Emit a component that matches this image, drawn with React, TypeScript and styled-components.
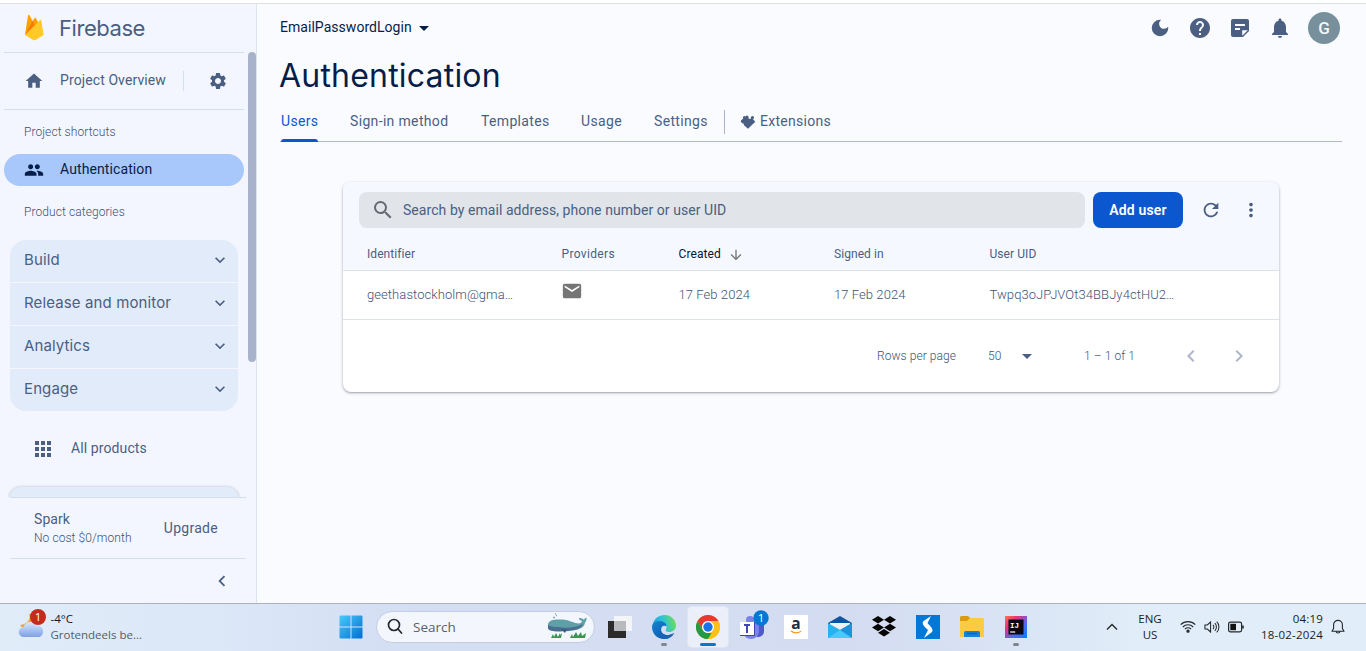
import React from "react";
import styled, { createGlobalStyle } from "styled-components";
import {
  MdHome, MdSettings, MdPeople, MdKeyboardArrowDown, MdApps, MdChevronLeft, MdChevronRight,
  MdDarkMode, MdHelp, MdNotifications, MdArrowDropDown, MdSearch, MdArrowDownward,
  MdEmail, MdRefresh, MdMoreVert,
} from "react-icons/md";

const slate = "#4a5f82";
const ink = "#041e49";
const medium = 450;
const light = 360;

const GlobalStyle = createGlobalStyle`
  * { box-sizing: border-box; }
  body { margin: 0; font-family: Roboto, "Liberation Sans", sans-serif; color: ${slate}; }
  svg { display: block; flex: none; }
`;

const Screen = styled.div`
  width: 1366px;
  height: 651px;
  overflow: hidden;
  display: flex;
  flex-direction: column;
  background: #fafbff;
`;
const BrowserEdge = styled.div`
  height: 4px;
  flex: none;
  background: #fff;
  border-bottom: 1px solid #dfe0e4;
`;
const Workspace = styled.div`
  height: 599px;
  display: flex;
`;

const Text = styled.span<{ $size?: number; $weight?: number; $track?: number; $color?: string }>`
  font-size: ${p => p.$size ?? 14}px;
  font-weight: ${p => p.$weight ?? light};
  letter-spacing: ${p => p.$track ?? 0.07}px;
  color: ${p => p.$color ?? (p.$weight ? slate : "#3d5275")};
  white-space: nowrap;
`;

/* ---- sidebar ---- */
const Sidebar = styled.aside`
  width: 257px;
  flex: none;
  display: flex;
  flex-direction: column;
  background: #f3f6fe;
  border-right: 1px solid #dde3ee;
`;
const Brand = styled.div`
  height: 49px;
  margin: 0 12px 0 4px;
  padding-left: 20px;
  display: flex;
  align-items: center;
  border-bottom: 1px solid #d7dfec;
`;
const BrandName = styled.span`
  margin-left: 14px;
  font: 400 22px Inter, sans-serif;
  letter-spacing: -0.45px;
`;
const NavScroll = styled.div`
  height: 444px;
  display: flex;
  justify-content: space-between;
`;
const NavContent = styled.div`
  width: 244px;
  padding-left: 4px;
  overflow: hidden;
`;
const Scrollbar = styled.div`
  width: 8px;
  height: 310px;
  margin-top: -1px;
  border-radius: 4px;
  background: #a8b3cb;
`;
const Overview = styled.div`
  height: 57px;
  padding: 0 0 2px 20px;
  display: flex;
  align-items: center;
  border-bottom: 1px solid #d7dfec;
  svg { margin-top: 2px; }
`;
const OverviewLabel = styled(Text)`
  width: 123px;
  margin-left: 16px;
`;
const GearCell = styled.div`
  width: 61px;
  height: 20px;
  padding-left: 24px;
  display: flex;
  align-items: center;
  border-left: 1px solid #d7dfec;
  margin-top: 2px;
  svg { margin-top: 0; }
`;
const SectionLabel = styled.div<{ $top?: number }>`
  height: 44px;
  margin-top: ${p => p.$top ?? 0}px;
  padding-left: 20px;
  font-size: 12px;
  font-weight: ${light};
  letter-spacing: 0.08px;
  line-height: 44px;
  color: #3d5275;
`;
const ActiveItem = styled.div`
  height: 32px;
  width: 240px;
  padding-left: 20px;
  display: flex;
  align-items: center;
  gap: 16px;
  border-radius: 16px;
  background: #a8c7fa;
  ${Text} { margin-bottom: 2px; }
`;
const Categories = styled.div`
  width: 228px;
  margin: 6px 0 0 6px;
  display: grid;
  gap: 1px;
  border-radius: 16px;
  overflow: hidden;
`;
const Category = styled.div`
  height: 42px;
  padding: 0 8px 3px 14px;
  display: flex;
  align-items: center;
  justify-content: space-between;
  background: #e2ebfa;
  font: 400 15px Inter, sans-serif;
  letter-spacing: 0.12px;
`;
const AllProducts = styled.div`
  height: 75px;
  padding-left: 27px;
  display: flex;
  align-items: center;
  gap: 16px;
  ${Text} { margin-bottom: 2px; }
`;
const PeekCard = styled.div`
  width: 230px;
  height: 30px;
  margin: 1px 0 0 5px;
  border-radius: 12px;
  background: #e2ebfa;
  box-shadow: 0 0 2px 1px #d3dae5;
`;
const Plan = styled.div`
  height: 62px;
  width: 236px;
  margin-left: 10px;
  padding: 0 28px 0 24px;
  display: flex;
  align-items: center;
  justify-content: space-between;
  border: solid #d5deeb;
  border-width: 1px 0;
`;
const PlanInfo = styled.div`
  display: grid;
  grid-template-rows: 18px 19px;
  line-height: 18px;
  align-items: end;
`;
const Collapse = styled.div`
  height: 44px;
  padding-right: 23px;
  display: flex;
  align-items: center;
  justify-content: flex-end;
`;

/* ---- main area ---- */
const Main = styled.main`
  flex: 1;
  padding: 0 24px 0 23px;
`;
const TopBar = styled.div`
  height: 48px;
  display: flex;
  align-items: center;
  justify-content: space-between;
`;
const Project = styled.div`
  display: flex;
  align-items: center;
  padding-bottom: 2px;
  svg { margin-top: 2px; }
`;
const Actions = styled.div`
  display: flex;
  align-items: center;
  padding-right: 2px;
`;
const Action = styled.div`
  width: 40px;
  display: grid;
  place-items: center;
`;
const Avatar = styled.div`
  width: 32px;
  height: 32px;
  margin-left: 8px;
  border-radius: 50%;
  display: grid;
  place-items: center;
  background: #78909c;
  color: #f3f7fa;
  font-size: 17px;
  font-weight: 500;
`;
const Title = styled.h1`
  height: 46px;
  margin: 0 0 0 -1px;
  font: 400 32px/48px Inter, sans-serif;
  letter-spacing: 0.2px;
  color: ${ink};
`;
const Tabs = styled.nav`
  height: 44px;
  padding-left: 1px;
  display: flex;
  border-bottom: 1px solid #b2b8ca;
`;
const Tab = styled.div<{ $active?: boolean; $width: number }>`
  width: ${p => p.$width}px;
  height: 44px;
  margin-right: 32px;
  font-size: 14px;
  font-weight: ${medium};
  letter-spacing: 0.34px;
  line-height: 46px;
  white-space: nowrap;
  color: ${p => (p.$active ? "#0b57d0" : slate)};
  &::after {
    content: "";
    display: ${p => (p.$active ? "block" : "none")};
    height: 3px;
    margin-top: -5px;
    border-radius: 3px 3px 0 0;
    background: #0b57d0;
  }
`;
const ExtensionsTab = styled.div`
  height: 24px;
  margin: 12px 0 0 -16px;
  padding-left: 15px;
  display: flex;
  align-items: center;
  gap: 4px;
  border-left: 1px solid #a8b4cc;
  ${Text} { margin-bottom: 2px; }
`;
const Card = styled.section`
  width: 936px;
  height: 210px;
  margin: 40px 0 0 63px;
  border-radius: 8px;
  overflow: hidden;
  background: #fff;
  box-shadow: 0 1px 3px rgba(40, 50, 70, 0.38), 0 1px 1px rgba(40, 50, 70, 0.12);
`;
const Toolbar = styled.div`
  height: 56px;
  padding: 0 16px;
  display: flex;
  align-items: center;
  background: #f5f8fe;
`;
const SearchField = styled.div`
  width: 726px;
  height: 36px;
  padding-left: 12px;
  display: flex;
  align-items: center;
  gap: 8px;
  border-radius: 8px;
  background: #e1e4e9;
  color: #666a70;
`;
const AddButton = styled.button`
  width: 90px;
  height: 36px;
  margin: 0 17px 0 8px;
  padding: 0;
  border: 0;
  border-radius: 8px;
  background: #0b57d0;
  color: #fff;
  font: 600 14px Roboto, sans-serif;
  letter-spacing: 0.15px;
`;
const MenuButton = styled.div`
  margin-left: 18px;
`;
const Row = styled.div<{ $head?: boolean }>`
  height: ${p => (p.$head ? 33 : 49)}px;
  padding: ${p => (p.$head ? "0 0 0 24px" : "0 0 2px 24px")};
  display: grid;
  grid-template-columns: 194.5px 117px 155.5px 155.5px 1fr;
  align-items: center;
  background: ${p => (p.$head ? "#f5f8fe" : "#fff")};
  border-bottom: 1px solid #dce2ea;
`;
const SortCell = styled.div`
  display: flex;
  align-items: center;
  gap: 7px;
  svg { margin-top: 1px; }
`;
const MailCell = styled.div`
  margin-left: -1px;
  padding-bottom: 6px;
  color: #757575;
`;
const Pager = styled.div`
  height: 72px;
  padding-right: 28px;
  display: flex;
  align-items: center;
  justify-content: flex-end;
`;
const PageSize = styled.div`
  width: 128px;
  padding-left: 32px;
  display: flex;
  align-items: center;
  gap: 13px;
`;
const PageButtons = styled.div`
  margin-left: 44px;
  display: flex;
  gap: 24px;
  color: #adb7ca;
`;

/* ---- taskbar ---- */
const Taskbar = styled.footer`
  height: 48px;
  flex: none;
  padding-bottom: 2px;
  display: flex;
  align-items: center;
  border-top: 1px solid #acb3bf;
  background: linear-gradient(90deg, #e0ecf8 0, #dbe7f7 230px, #d5dff4 380px, #d3dcf1 850px, #dae5f5 1030px, #e1edf8 1140px, #e1edf8 100%);
  font-family: "Open Sans", "Noto Sans", sans-serif;
  font-size: 11.5px;
  color: #1b1d22;
`;
const Weather = styled.div`
  width: 339px;
  padding-left: 18px;
  display: flex;
  align-items: center;
  svg { margin-bottom: 7px; }
`;
const WeatherText = styled.div`
  margin-left: 3.5px;
  line-height: 16px;
  color: #555d68;
  b { display: block; font-weight: 400; color: #15181c; }
`;
const TaskSearch = styled.div`
  width: 219px;
  height: 32px;
  margin-left: 13px;
  padding: 0 5px 0 10px;
  display: flex;
  align-items: center;
  border: 1px solid #c3cde2;
  border-radius: 16px;
  background: #f3f6fd;
  font-size: 13.5px;
  color: #5c6068;
  span { margin-left: 9px; flex: 1; }
`;
const Apps = styled.div`
  width: 496px;
  padding-left: 3px;
  display: flex;
`;
const AppSlot = styled.div<{ $state?: "open" | "focus" }>`
  width: 40px;
  height: 40px;
  margin: 0 2px;
  display: grid;
  place-items: center;
  border-radius: 4px;
  background: ${p => (p.$state === "focus" ? "#eaeff9" : "transparent")};
  box-shadow: ${p => (p.$state === "focus" ? "0 0 0 1px #dfe5f2" : "none")};
  position: relative;
  &::after {
    content: "";
    position: absolute;
    bottom: 1px;
    left: 50%;
    transform: translateX(-50%);
    width: ${p => (p.$state === "focus" ? 16 : p.$state ? 6 : 0)}px;
    height: 3px;
    border-radius: 2px;
    background: ${p => (p.$state === "focus" ? "#0078d4" : "#7f858f")};
  }
`;
const Tray = styled.div`
  margin-left: 15px;
  display: flex;
  align-items: center;
  gap: 8px;
`;
const Language = styled.div`
  width: 36px;
  margin: 0 4px 0 6px;
  text-align: center;
  line-height: 16px;
`;
const Clock = styled.div`
  width: 64px;
  margin-left: 7px;
  text-align: right;
  line-height: 16px;
  letter-spacing: 0.2px;
  white-space: nowrap;
`;

const FirebaseLogo = () => (
  <svg width="21" height="28" viewBox="0 0 21 28">
    <path d="M1 21 4 1.600C4.100.600 5.200.500 5.600 1.400L8.600 7 10.500 4.200C10.900 3.600 11.700 3.600 12 4.200L19 18Z" fill="#ffa000" />
    <path d="M1 21 8.600 7 11.600 12.500Z" fill="#f57c00" />
    <path d="M1 21 15.800 6.200C16.400 5.600 17.200 5.800 17.300 6.700L19.700 21 11.400 26C10.700 26.400 10 26.400 9.300 26Z" fill="#ffca28" />
  </svg>
);
const NoteIcon = () => (
  <svg width="22" height="22" viewBox="-1 -1 22 22">
    <path d="M3 1h14a2 2 0 0 1 2 2v10l-6 6H3a2 2 0 0 1-2-2V3a2 2 0 0 1 2-2Z" fill={slate} />
    <path d="M5 7h10M5 11h5" stroke="#fafbff" strokeWidth="2" />
    <path d="M12.200 12.200h5.600l-5.600 5.600Z" fill="#fafbff" />
  </svg>
);
const PuzzleIcon = () => (
  <svg width="16" height="16" viewBox="0 0 16 16">
    <path d="M1.200 6.200 3.200 4.600C2.300 2.600 4.500 1.300 5.700 2.600L7 1.300 8.700 2.700C7.600 4.600 9.800 5.800 11 4.200 10.200 2.300 12.600 1 13.800 2.700 14.300 3.700 13.800 4.700 13 5.300L15.300 7.800 12.700 10.300 8 14.800 3.700 10.900C4.300 10 3.600 9.100 2.500 9.600L.7 7.500Z" fill={slate} />
  </svg>
);
const WeatherIcon = () => (
  <svg width="29" height="34" viewBox="0 0 29 34">
    <defs><linearGradient id="cloud" x2="0" y2="1"><stop stopColor="#d9e9fd" /><stop offset="1" stopColor="#7f9fe4" /></linearGradient></defs>
    <path d="M11 8c2 5-1 10-9 11 3 5 11 5 14 0V8Z" fill="#f3a32b" />
    <path d="M6 31a5 5 0 0 1-.5-10C7 15 16 14 18.500 20c4-1 6.500 2 6.500 5.500S23 31 20 31Z" fill="url(#cloud)" />
    <circle cx="20" cy="11" r="8" fill="#c42b1c" />
    <text x="20" y="15" fontSize="11.500" textAnchor="middle" fill="#fff">1</text>
  </svg>
);
const WindowsIcon = () => (
  <svg width="24" height="24" viewBox="0 0 24 24">
    <defs><linearGradient id="win" x2="1" y2="1"><stop stopColor="#4cc9fa" /><stop offset="1" stopColor="#006fd0" /></linearGradient></defs>
    <path d="M1.500.5H11.500V11.500H.5V1.500a1 1 0 0 1 1-1ZM12.500.5h10a1 1 0 0 1 1 1v10h-11ZM.5 12.500h11v11h-10a1 1 0 0 1-1-1ZM12.500 12.500h11v10a1 1 0 0 1-1 1h-10Z" fill="url(#win)" />
  </svg>
);
const LensIcon = () => (
  <svg width="17" height="17" viewBox="0 0 17 17" fill="none" stroke="#24272c" strokeWidth="1.700" strokeLinecap="round">
    <circle cx="7" cy="7" r="5.500" /><path d="m11 11 3.500 4" />
  </svg>
);
const WhaleIcon = () => (
  <svg width="42" height="28" viewBox="0 0 42 28">
    <path d="M6 4.500h2M9 2.500h1M8 1h1" stroke="#8aa4d6" strokeWidth="1.300" />
    <path d="M1 11C2 7 7 6 15 6.500c8 .5 12 4 17 4 2-.3 3-1.500 3-2.500-2-.5-3-1.500-3-3 2 0 4 .5 5 2 .3-1.300 1-2 2.500-2.500.3 2.500-.5 4-1.500 5C38 14 32 17 25 17.500 17 19 1 19 1 15Z" fill="#5f9fa8" />
    <path d="M1 12c3 2 7 2 10 2 10 2 19 0 25-3-2 5-9 6.500-15 6.800C13 18.500 1 19 1 15Z" fill="#4a6d90" />
    <path d="m14 16 4 4 2-4" fill="#3d5c80" />
    <path d="m4 25 2-4 1 3 2-4 2 4 2-4v2l2-2-1 5ZM23 25l2-4 1 3 3-5 2 4 3-4 1 4 4-3-1 5Z" fill="#3d9151" />
  </svg>
);
const TaskViewIcon = () => (
  <svg width="24" height="24" viewBox="0 0 24 24">
    <path d="M6 1h18v15H6Z" fill="#f4f5f7" /><path d="M0 6h18v17H0Z" fill="#2b2b2b" />
    <path d="M6 6h12v10H6Z" fill="#b9babd" />
  </svg>
);
const EdgeIcon = () => (
  <svg width="24" height="24" viewBox="0 0 24 24">
    <defs>
      <linearGradient id="edgeTop" y1=".6" x2="1" y2=".4"><stop stopColor="#1b9de2" /><stop offset=".5" stopColor="#30c4d2" /><stop offset="1" stopColor="#6fdd55" /></linearGradient>
      <linearGradient id="edgeBase" x2="1" y2="1"><stop stopColor="#1384d8" /><stop offset="1" stopColor="#0d4f9e" /></linearGradient>
    </defs>
    <path d="M.5 10C2 3.500 7 0 12.500 0 19 0 24 5 24 10.500c0 4-3 6.500-7 6.500-3 0-4-1.500-3-3 2-3-.5-6-4.500-6-4 0-7 1-9 2Z" fill="url(#edgeTop)" />
    <path d="M0 12c0-3 3-6 7.500-6C12 6 15 9 14.500 11.500 12 9.500 8.500 12 9 15c.5 5 7 7 13 3-2 4-6 6-10 6C5 24 0 18.500 0 12Z" fill="url(#edgeBase)" />
    <path d="M9 15c.5 5 7 7 13 3-2 4-6 6-10 6-5-1.500-6.500-8-2.500-11Z" fill="#1764b5" />
  </svg>
);
const ChromeIcon = () => (
  <svg width="24" height="24" viewBox="0 0 24 24">
    <circle cx="12" cy="12" r="12" fill="#fbc116" />
    <path d="M1.600 6A12 12 0 0 1 22.400 6H12a6 6 0 0 0-5.200 9Z" fill="#e33b2e" />
    <path d="M1.600 6 6.800 15A6 6 0 0 0 12 18h5.200L12 24A12 12 0 0 1 1.600 6Z" fill="#229a4a" />
    <path d="M12 6h10.400A12 12 0 0 1 12 24l5.200-9A6 6 0 0 0 12 6Z" fill="#fbc116" />
    <circle cx="12" cy="12" r="6" fill="#fff" /><circle cx="12" cy="12" r="4.700" fill="#1a73e8" />
  </svg>
);
const TeamsIcon = () => (
  <svg width="40" height="34" viewBox="0 0 40 34">
    <circle cx="18" cy="10" r="4" fill="#7b83eb" />
    <path d="M22 13h10v8c0 4-3 6-7 6Z" fill="#5059c9" />
    <path d="M11 13h16v8c0 4-3 8-8 8-4 0-7-3-8-6Z" fill="#7b83eb" />
    <path d="M8 12h15v14H8Z" fill="#4048ab" />
    <path d="M8 12h14v13H8Z" fill="#fff" />
    <path d="M12 15h6M15 15v8" stroke="#4048ab" strokeWidth="2" />
    <circle cx="29" cy="8" r="7.700" fill="#0078d4" />
    <text x="29" y="12" fontSize="11.500" textAnchor="middle" fill="#fff">1</text>
  </svg>
);
const AmazonIcon = () => (
  <svg width="24" height="32" viewBox="0 -4 24 32">
    <path d="M0 0h24v24H0Z" fill="#fff" />
    <text x="12" y="14" fontSize="15.500" fontWeight="700" textAnchor="middle" fill="#222d3b">a</text>
    <path d="M7 16c3 2.200 7 2.200 10 .2" fill="none" stroke="#f7981d" strokeWidth="1.300" />
  </svg>
);
const MailIcon = () => (
  <svg width="24" height="24" viewBox="0 0 24 24">
    <path d="M0 8 12 1l12 7v4H0Z" fill="#0a55a4" /><path d="M2 8h20v8H2Z" fill="#f0f1f3" />
    <path d="M0 8v15h24V8l-12 7Z" fill="#29b3ec" /><path d="M24 8v15L6 11.500l6 3.500Z" fill="#1f92db" />
    <path d="M0 23 12 15 24 23Z" fill="#45cbf5" />
  </svg>
);
const DropboxIcon = () => (
  <svg width="24" height="22" viewBox="0 0 24 22">
    <path d="m6 0 6 3.800-6 3.800-6-3.800ZM18 0l6 3.800-6 3.800-6-3.800ZM6 7.700l6 3.800-6 3.800-6-3.800ZM18 7.700l6 3.800-6 3.800-6-3.800ZM12 13l6 3.800-6 3.800-6-3.800Z" fill="#050505" />
  </svg>
);
const BoltIcon = () => (
  <svg width="24" height="24" viewBox="0 0 24 24">
    <path d="M0 0h24v24H0Z" fill="#0078d7" />
    <path d="M15 1 7 6.500c-1 3 1 5 5 8.500L8 23l8-6c2-3-2-6-4.500-9Z" fill="#fff" />
  </svg>
);
const FolderIcon = () => (
  <svg width="24" height="24" viewBox="0 0 24 24">
    <path d="M0 2.500A1.500 1.500 0 0 1 1.500 1H8l2 2v5H0Z" fill="#d99a12" />
    <path d="M0 6h7l3-3h12.500A1.500 1.500 0 0 1 24 4.500V22H0Z" fill="#fccb42" />
    <path d="M4 22v-4.500A1.500 1.500 0 0 1 5.500 16h13a1.500 1.500 0 0 1 1.500 1.500V22Z" fill="#1583d8" /><path d="M7 18.500h10" stroke="#0c60ad" strokeWidth="1.200" />
  </svg>
);
const IdeaIcon = () => (
  <svg width="22" height="22" viewBox="0 0 22 22">
    <defs><linearGradient id="idea" x2="1" y2="1"><stop stopColor="#f97a3c" /><stop offset=".3" stopColor="#e8307c" /><stop offset=".65" stopColor="#4b6cf5" /><stop offset="1" stopColor="#087cfa" /></linearGradient></defs>
    <path d="M0 0h22v22H0Z" fill="url(#idea)" /><path d="M3.500 3.500h15v15h-15Z" fill="#090713" />
    <path d="M5.200 16h5" stroke="#fff" strokeWidth="1.200" />
    <text x="5" y="11.500" fontSize="7.500" fontFamily="Liberation Mono, monospace" fontWeight="700" fill="#fff">IJ</text>
  </svg>
);
const WifiIcon = () => (
  <svg width="16" height="14" viewBox="0 0 16 14" fill="none" stroke="#24272c" strokeWidth="1.100">
    <path d="M.7 4.700a10.300 10.300 0 0 1 14.600 0M2.800 7a7.300 7.300 0 0 1 10.400 0M4.900 9.200a4.400 4.400 0 0 1 6.200 0" /><circle cx="8" cy="11.200" r="1.100" fill="#24272c" />
  </svg>
);
const SoundIcon = () => (
  <svg width="16" height="14" viewBox="0 0 17 14" fill="none" stroke="#24272c" strokeWidth="1.100">
    <path d="M1 4.800h2.500L7 1.700v10.600L3.500 9.200H1ZM9.500 4.800a3 3 0 0 1 0 4.400M11.500 3a5.500 5.500 0 0 1 0 8M13.500 1.300a8 8 0 0 1 0 11.400" />
  </svg>
);
const BatteryIcon = () => (
  <svg width="16" height="12" viewBox="0 0 16 12">
    <rect x=".6" y="1.100" width="13" height="9.800" rx="1.800" fill="none" stroke="#24272c" strokeWidth="1.200" />
    <path d="M2.300 2.800h5.700v6.400H2.300Z" fill="#111" /><path d="M15 4.500v3" stroke="#24272c" strokeWidth="1.600" />
  </svg>
);
const BellIcon = () => (
  <svg width="14" height="16" viewBox="0 0 14 16" fill="none" stroke="#24272c" strokeWidth="1.100" strokeLinejoin="round">
    <path d="M2.600 9.500V5.800a4.400 4.400 0 0 1 8.800 0v3.700l1.600 2.800H1ZM5 12.500c.3 2 3.700 2 4 0" />
  </svg>
);

const tabs: [string, number][] = [["Users", 37], ["Sign-in method", 99], ["Templates", 68], ["Usage", 41], ["Settings", 54]];

const apps: { icon: React.ReactNode; state?: "open" | "focus" }[] = [
  { icon: <TaskViewIcon /> }, { icon: <EdgeIcon />, state: "open" }, { icon: <ChromeIcon />, state: "focus" },
  { icon: <TeamsIcon /> }, { icon: <AmazonIcon /> }, { icon: <MailIcon /> }, { icon: <DropboxIcon /> },
  { icon: <BoltIcon /> }, { icon: <FolderIcon /> }, { icon: <IdeaIcon />, state: "open" },
];

export default function App() {
  return (
    <Screen>
      <GlobalStyle />
      <BrowserEdge />
      <Workspace>
        <Sidebar>
          <Brand><FirebaseLogo /><BrandName>Firebase</BrandName></Brand>
          <NavScroll>
            <NavContent>
              <Overview>
                <MdHome size={20} />
                <OverviewLabel $weight={medium} $track={0.1}>Project Overview</OverviewLabel>
                <GearCell><MdSettings size={20} /></GearCell>
              </Overview>
              <SectionLabel>Project shortcuts</SectionLabel>
              <ActiveItem>
                <MdPeople size={20} color={ink} />
                <Text $weight={medium} $track={0.1} $color={ink}>Authentication</Text>
              </ActiveItem>
              <SectionLabel $top={4}>Product categories</SectionLabel>
              <Categories>
                {["Build", "Release and monitor", "Analytics", "Engage"].map(name => (
                  <Category key={name}>{name}<MdKeyboardArrowDown size={20} /></Category>
                ))}
              </Categories>
              <AllProducts><MdApps size={24} /><Text $weight={medium} $track={0.1}>All products</Text></AllProducts>
              <PeekCard />
            </NavContent>
            <Scrollbar />
          </NavScroll>
          <Plan>
            <PlanInfo>
              <Text $weight={medium}>Spark</Text>
              <Text $size={12}>No cost $0/month</Text>
            </PlanInfo>
            <Text $weight={medium} $track={0.28}>Upgrade</Text>
          </Plan>
          <Collapse><MdChevronLeft size={22} /></Collapse>
        </Sidebar>
        <Main>
          <TopBar>
            <Project><Text $weight={medium} $track={0.04} $color={ink}>EmailPasswordLogin</Text><MdArrowDropDown size={24} color={ink} /></Project>
            <Actions>
              <Action><MdDarkMode size={22} /></Action>
              <Action><MdHelp size={24} /></Action>
              <Action><NoteIcon /></Action>
              <Action><MdNotifications size={24} /></Action>
              <Avatar>G</Avatar>
            </Actions>
          </TopBar>
          <Title>Authentication</Title>
          <Tabs>
            {tabs.map(([name, width], i) => <Tab key={name} $width={width} $active={i === 0}>{name}</Tab>)}
            <ExtensionsTab>
              <PuzzleIcon />
              <Text $weight={medium} $track={0.28}>Extensions</Text>
            </ExtensionsTab>
          </Tabs>
          <Card>
            <Toolbar>
              <SearchField><MdSearch size={24} /><Text $weight={medium} $track={0.06}>Search by email address, phone number or user UID</Text></SearchField>
              <AddButton>Add user</AddButton>
              <MdRefresh size={22} />
              <MenuButton><MdMoreVert size={22} /></MenuButton>
            </Toolbar>
            <Row $head>
              <Text $size={12} $weight={medium}>Identifier</Text>
              <Text $size={12} $weight={medium} $track={0.35}>Providers</Text>
              <SortCell><Text $size={12} $weight={medium} $track={0.1} $color="#041535">Created</Text><MdArrowDownward size={16} color="#757575" /></SortCell>
              <Text $size={12} $weight={medium}>Signed in</Text>
              <Text $size={12} $weight={medium}>User UID</Text>
            </Row>
            <Row>
              <Text $size={13}>geethastockholm@gma…</Text>
              <MailCell><MdEmail size={22} /></MailCell>
              <Text $size={13}>17 Feb 2024</Text>
              <Text $size={13}>17 Feb 2024</Text>
              <Text $size={13}>Twpq3oJPJVOt34BBJy4ctHU2…</Text>
            </Row>
            <Pager>
              <Text $size={12}>Rows per page</Text>
              <PageSize><Text $size={12}>50</Text><MdArrowDropDown size={24} /></PageSize>
              <Text $size={12}>1 – 1 of 1</Text>
              <PageButtons><MdChevronLeft size={24} /><MdChevronRight size={24} /></PageButtons>
            </Pager>
          </Card>
        </Main>
      </Workspace>
      <Taskbar>
        <Weather><WeatherIcon /><WeatherText><b>-4°C</b>Grotendeels be...</WeatherText></Weather>
        <WindowsIcon />
        <TaskSearch><LensIcon /><span>Search</span><WhaleIcon /></TaskSearch>
        <Apps>{apps.map((app, i) => <AppSlot key={i} $state={app.state}>{app.icon}</AppSlot>)}</Apps>
        <Tray>
          <svg width="12" height="12" viewBox="0 0 12 12"><path d="m1 8.500 5-5 5 5" fill="none" stroke="#24272c" strokeWidth="1.400" /></svg>
          <Language>ENG US</Language>
          <WifiIcon />
          <SoundIcon />
          <BatteryIcon />
          <Clock>04:19<br />18-02-2024</Clock>
          <BellIcon />
        </Tray>
      </Taskbar>
    </Screen>
  );
}
